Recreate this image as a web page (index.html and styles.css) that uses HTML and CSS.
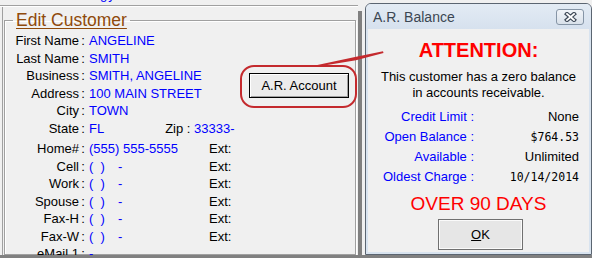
FILE: index.html
```html
<!DOCTYPE html>
<html>
<head>
<meta charset="utf-8">
<link rel="stylesheet" href="styles.css">
</head>
<body>
<div class="app">
  <div class="desk">
    <div class="mainwin">
      <div class="strip"><span class="cut">gy</span></div>
      <div class="rule"></div>
      <div class="form">
        <fieldset class="group">
          <legend>Edit Customer</legend>
          <div class="grid">
            <div class="lbl">First Name</div><div class="col">:</div><div class="val">ANGELINE</div>
            <div class="lbl">Last Name</div><div class="col">:</div><div class="val">SMITH</div>
            <div class="lbl">Business</div><div class="col">:</div><div class="val">SMITH, ANGELINE</div>
            <div class="lbl">Address</div><div class="col">:</div><div class="val">100 MAIN STREET</div>
            <div class="lbl">City</div><div class="col">:</div><div class="val">TOWN</div>
            <div class="lbl">State</div><div class="col">:</div><div class="val wide">FL<span class="zip">Zip : <span class="blue">33333-</span></span></div>
            <button class="btn-ar">A.R. Account</button>
          </div>
          <div class="grid phones">
            <div class="lbl">Home#</div><div class="col">:</div><div class="val">(555) 555-5555</div><div class="ext">Ext:</div>
            <div class="lbl">Cell</div><div class="col">:</div><div class="val"><span class="par">(&nbsp;&nbsp;)</span><span class="dash">-</span></div><div class="ext">Ext:</div>
            <div class="lbl">Work</div><div class="col">:</div><div class="val"><span class="par">(&nbsp;&nbsp;)</span><span class="dash">-</span></div><div class="ext">Ext:</div>
            <div class="lbl">Spouse</div><div class="col">:</div><div class="val"><span class="par">(&nbsp;&nbsp;)</span><span class="dash">-</span></div><div class="ext">Ext:</div>
            <div class="lbl">Fax-H</div><div class="col">:</div><div class="val"><span class="par">(&nbsp;&nbsp;)</span><span class="dash">-</span></div><div class="ext">Ext:</div>
            <div class="lbl">Fax-W</div><div class="col">:</div><div class="val"><span class="par">(&nbsp;&nbsp;)</span><span class="dash">-</span></div><div class="ext">Ext:</div>
            <div class="lbl">eMail 1</div><div class="col">:</div><div class="val">-</div>
          </div>
        </fieldset>
      </div>
    </div>
    <div class="vbar"></div>
    <div class="dialog">
      <div class="dtitle">
        <span class="dname">A.R. Balance</span>
        <span class="xbtn"><svg width="13" height="10" viewBox="0 0 13 10"><path d="M3 2 L10 8 M10 2 L3 8" stroke="#3f4a58" stroke-width="4.2" stroke-linecap="square" fill="none"/><path d="M3 2 L10 8 M10 2 L3 8" stroke="#ffffff" stroke-width="1.8" stroke-linecap="square" fill="none"/></svg></span>
      </div>
      <div class="dbody">
        <div class="attn">ATTENTION:</div>
        <div class="msg">This customer has a zero balance<br>in accounts receivable.</div>
        <div class="stats">
          <div class="slbl">Credit Limit :</div><div class="sval">None</div>
          <div class="slbl">Open Balance :</div><div class="sval mono">$764.53</div>
          <div class="slbl">Available :</div><div class="sval">Unlimited</div>
          <div class="slbl">Oldest Charge :</div><div class="sval mono">10/14/2014</div>
        </div>
        <div class="over">OVER 90 DAYS</div>
        <button class="okbtn"><u>O</u>K</button>
      </div>
    </div>
  </div>
  <div class="band"></div>
  <svg class="annot" width="592" height="258" viewBox="0 0 592 258">
    <rect x="241" y="66" width="115" height="41" rx="13" ry="13" fill="none" stroke="#c42a2e" stroke-width="2"/>
    <polygon points="315,65.5 355,57 383,51.3 383.5,53 356,60.3 318,66.5" fill="#c42a2e"/>
  </svg>
</div>
</body>
</html>
```

FILE: styles.css
```css
html, body {
  margin: 0;
  padding: 0;
}
body {
  width: 592px;
  height: 258px;
  overflow: hidden;
  background: #f0f0f0;
  font-family: "Liberation Sans", Arial, sans-serif;
  font-size: 13px;
  color: #000;
}
.app {
  position: relative;
  width: 592px;
  height: 258px;
  display: flex;
  flex-direction: column;
}
.desk {
  height: 255px;
  overflow: hidden;
  display: flex;
}
.band {
  height: 3px;
  background: #808080;
}
.mainwin {
  width: 358px;
  flex: none;
  display: flex;
  flex-direction: column;
}
.strip {
  height: 6px;
  overflow: hidden;
  padding-left: 100px;
  color: #0000ff;
  line-height: 13px;
}
.cut {
  display: block;
  margin-top: -12px;
  letter-spacing: 1px;
}
.rule {
  height: 1px;
  background: #a0a0a0;
  border-bottom: 1px solid #ffffff;
}
.form {
  flex: 1;
  margin-left: 2px;
  border-left: 1px solid #a0a0a0;
  display: flex;
  flex-direction: column;
}
.group {
  margin: 3px 0 0 1px;
  padding: 2px 0 0 0;
  width: 350px;
  height: 241px;
  border: 1px solid #a0a0a0;
  box-shadow: 1px 1px 0 #ffffff, inset 1px 1px 0 #ffffff;
  min-inline-size: 0;
}
.group legend {
  margin-left: 8px;
  padding: 0 3px;
  font-size: 17.5px;
  line-height: 20px;
  color: #8f4a0b;
  text-decoration: underline;
  text-underline-offset: 2px;
}
.grid {
  display: grid;
  grid-template-columns: 74px 8px 122px 40px 100px;
  grid-auto-rows: 17.5px;
  line-height: 17.5px;
  white-space: nowrap;
}
.phones {
  margin-top: 3px;
}
.lbl {
  grid-column: 1;
  text-align: right;
}
.col {
  text-align: center;
}
.val {
  padding-left: 2px;
  color: #0000ff;
}
.val.wide {
  grid-column: 3 / span 2;
}
.zip {
  margin-left: 61px;
  color: #000;
}
.blue {
  color: #0000ff;
}
.ext {
  grid-column: 4;
}
.dash {
  margin-left: 13px;
}
.btn-ar {
  grid-column: 5;
  grid-row: 3 / span 2;
  align-self: center;
  margin-top: 2px;
  width: 100px;
  height: 25px;
  padding: 0;
  border: 1px solid #000;
  background: #ececec;
  box-shadow: inset 1px 1px 0 #ffffff, inset -1px -1px 0 #a0a0a0;
  font-family: "Liberation Sans", Arial, sans-serif;
  font-size: 13px;
  color: #000;
}
.vbar {
  width: 4px;
  flex: none;
  margin-top: 11px;
  background: #808080;
}
.dialog {
  width: 227px;
  height: 252px;
  flex: none;
  margin: 3px 0 0 3px;
  box-sizing: border-box;
  border: 1px solid #5b6571;
  border-radius: 6px 6px 0 0;
  background: #d8e3ef;
  display: flex;
  flex-direction: column;
}
.dtitle {
  height: 25px;
  flex: none;
  display: flex;
  align-items: center;
  justify-content: space-between;
  padding: 0 7px 0 7px;
  border-radius: 5px 5px 0 0;
  background: linear-gradient(#e3ebf4, #d6e1ee);
}
.dname {
  font-size: 14px;
  color: #3b4652;
}
.xbtn {
  width: 26px;
  height: 14px;
  border: 1px solid #8695a6;
  border-radius: 3px;
  background: linear-gradient(#f1f4f8, #d9e1ea);
  display: flex;
  align-items: center;
  justify-content: center;
}
.dbody {
  flex: 1;
  margin: 0 2px 2px;
  background: #f0f0f0;
  padding-top: 9px;
  text-align: center;
}
.attn {
  font-size: 20px;
  line-height: 24px;
  font-weight: bold;
  color: #ff0000;
}
.msg {
  margin-top: 7px;
  line-height: 16px;
}
.stats {
  margin-top: 6px;
  display: grid;
  grid-template-columns: 106px 105px;
  grid-auto-rows: 20px;
  line-height: 20px;
  white-space: nowrap;
}
.slbl {
  text-align: right;
  color: #0000ff;
}
.sval {
  text-align: right;
}
.mono {
  font-family: "DejaVu Sans Mono", monospace;
  font-size: 11.5px;
}
.over {
  margin-top: 6px;
  font-size: 19px;
  line-height: 22px;
  color: #ff0000;
}
.okbtn {
  display: block;
  margin: 4px 0 0 70px;
  width: 85px;
  height: 31px;
  padding: 0;
  border: 1px solid #707070;
  background: #e6e6e6;
  box-shadow: inset 0 0 0 1px #fafafa;
  font-family: "Liberation Sans", Arial, sans-serif;
  font-size: 13px;
  color: #000;
}
.annot {
  position: absolute;
  left: 0;
  top: 0;
  pointer-events: none;
}
```
